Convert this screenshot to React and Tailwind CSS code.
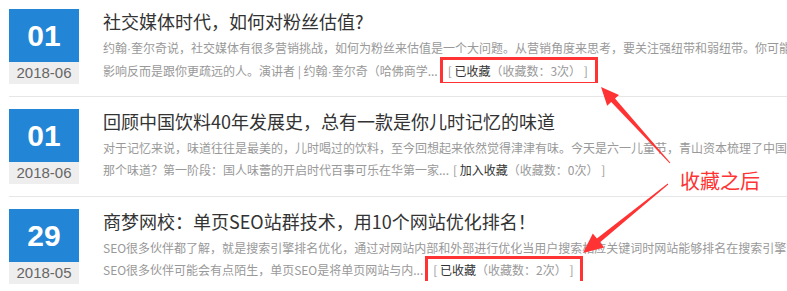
import React from 'react';

const articles = [
  {
    day: '01',
    month: '2018-06',
    title: '社交媒体时代，如何对粉丝估值?',
    line1: '约翰·奎尔奇说，社交媒体有很多营销挑战，如何为粉丝来估值是一个大问题。从营销角度来思考，要关注强纽带和弱纽带。你可能会发现真正对你有',
    line2: '影响反而是跟你更疏远的人。演讲者 | 约翰·奎尔奇（哈佛商学...',
    saved: true,
    count: 3,
  },
  {
    day: '01',
    month: '2018-06',
    title: '回顾中国饮料40年发展史，总有一款是你儿时记忆的味道',
    line1: '对于记忆来说，味道往往是最美的，儿时喝过的饮料，至今回想起来依然觉得津津有味。今天是六一儿童节，青山资本梳理了中国饮料的发展',
    line2: '那个味道？第一阶段：国人味蕾的开启时代百事可乐在华第一家...',
    saved: false,
    count: 0,
  },
  {
    day: '29',
    month: '2018-05',
    title: '商梦网校：单页SEO站群技术，用10个网站优化排名！',
    line1: 'SEO很多伙伴都了解，就是搜索引擎排名优化，通过对网站内部和外部进行优化当用户搜索相应关键词时网站能够排名在搜索引擎前面',
    line2: 'SEO很多伙伴可能会有点陌生，单页SEO是将单页网站与内...',
    saved: true,
    count: 2,
  },
];

// 中文字体里的间隔号是全角的，原图里是窄的
function Text({ children }) {
  const parts = children.split('·');
  return parts.map((p, i) => (
    <React.Fragment key={i}>
      {i > 0 && <span className="font-['Liberation_Sans',Arial,sans-serif]">·</span>}
      {p}
    </React.Fragment>
  ));
}

function FavLink({ saved, count }) {
  const inner = (
    <>
      <span className="text-[#999]">[ </span>
      <span className="text-[#333]">{saved ? '已收藏' : '加入收藏'}</span>
      <span className="text-[#999]">（收藏数：{count}次） ]</span>
    </>
  );

  // 已收藏的条目在截图里被红框圈出
  if (saved) {
    return (
      <span className="inline-block align-top -my-[3px] ml-[2px] border-[3px] border-[#ff3333] pl-[5px] pr-[7px] leading-[22px]">
        {inner}
      </span>
    );
  }
  return <span className="ml-[4px]">{inner}</span>;
}

function Row({ item, first }) {
  return (
    <div className={`flex items-start pb-3 border-b border-[#e6e6e6] ${first ? 'pt-[9px]' : 'pt-3'}`}>
      <div className="w-[70px] shrink-0 text-center font-['Liberation_Sans',Arial,sans-serif]">
        <div className="h-[53px] bg-[#2285d6] text-white text-[30px] font-bold leading-[53px]">{item.day}</div>
        <div className="h-[22px] bg-[#eeeeee] text-[#666] text-[15px] leading-[22px]">{item.month}</div>
      </div>
      <div className="ml-6 min-w-0 flex-1 overflow-hidden">
        <h2 className="text-[18px] leading-6 text-[#333] whitespace-nowrap">{item.title}</h2>
        <div className="mt-1 text-[12px] leading-[22px] text-[#999]">
          <p className="whitespace-nowrap">
            <Text>{item.line1}</Text>
          </p>
          <p className="whitespace-nowrap">
            <Text>{item.line2}</Text>
            <FavLink saved={item.saved} count={item.count} />
          </p>
        </div>
      </div>
    </div>
  );
}

export default function App() {
  return (
    <div className="relative w-[787px] h-[291px] overflow-hidden bg-white font-['Noto_Sans_CJK_SC','Microsoft_YaHei',sans-serif]">
      <div className="pl-[9px]">
        {articles.map((item, i) => (
          <Row key={i} item={item} first={i === 0} />
        ))}
      </div>

      {/* 标注：箭头和文字 */}
      <svg className="absolute left-0 top-0 pointer-events-none" width="787" height="291" viewBox="0 0 787 291">
        <polygon
          fill="#ff3333"
          points="601,87 619,94.9 615,98.6 670.4,162.7 669.6,163.3 611.2,102 607.2,105.7"
        />
        <polygon
          fill="#ff3333"
          points="583,253 592.8,233.4 596.9,238.5 667.7,183.6 668.3,184.4 600.1,242.3 604.2,247.4"
        />
      </svg>
      <div className="absolute left-[680px] top-[171px] text-[20px] leading-5 text-[#ff3333]">收藏之后</div>
    </div>
  );
}
